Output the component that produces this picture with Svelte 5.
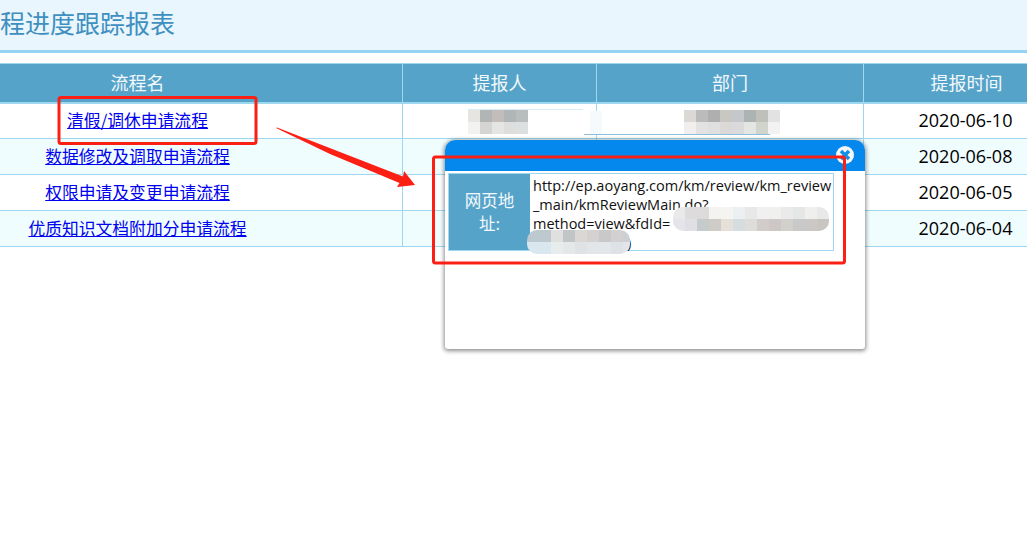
<script>
  const rows = [
    { name: '清假/调休申请流程', date: '2020-06-10' },
    { name: '数据修改及调取申请流程', date: '2020-06-08' },
    { name: '权限申请及变更申请流程', date: '2020-06-05' },
    { name: '优质知识文档附加分申请流程', date: '2020-06-04' }
  ];
  const mosaics = [
    { id: 'm1', cols: 5, cells: ['#e6e5e2','#b2b5b6','#c2bdbb','#b0b5b8','#b9bdbd','#f2f2f1','#d5d5d4','#e5e5e4','#dededd','#dde0e1'] },
    { id: 'm2', cols: 8, cells: ['#dbd9d6','#bcbbbb','#b0afb0','#c8c7c2','#c5c8ca','#adb2b3','#c0c0ba','#e3e2e2','#f0efee','#e3e2e2','#e0dfdf','#dbd8d8','#dadadc','#e4e6e3','#d0d4cb','#f2f2f2'] },
    { id: 'm3', cols: 13, cells: ['#e9e9ea','#dddbdc','#dcdadb','#f4f3f1','#f5f4f2','#edf0f2','#e8e8e8','#f0f0f0','#f0f0ef','#eaeaea','#e5e6e6','#efefee','#e8e8e8','#e4e4ea','#e0e0e4','#c5cacb','#cfccc8','#e6e1d8','#d5dde0','#dfdddc','#d2cccb','#cdc8c7','#d1d0cb','#c9c9c9','#cbc8c6','#c9c6c2'] },
    { id: 'm4', cols: 9, cells: ['#bcc9ce','#bcc9ce','#e0e1df','#c2c5c6','#dad7d5','#d4d2d1','#cac9c9','#d2d0d0','#cccfd3','#dbe7ef','#dbe7ef','#e7ecec','#e4e8e9','#dfe3e6','#e2e6e9','#e4e7ea','#dee2e6','#e2e6ea'] }
  ];
</script>

<div class="page">
  <header class="title-bar"><h1>流程进度跟踪报表</h1></header>

  <table>
    <colgroup>
      <col class="c1" /><col class="c2" /><col class="c3" /><col class="c4" />
    </colgroup>
    <thead>
      <tr><th>流程名</th><th>提报人</th><th>部门</th><th>提报时间</th></tr>
    </thead>
    <tbody>
      {#each rows as row}
        <tr>
          <td><a href="#top">{row.name}</a></td>
          <td></td>
          <td></td>
          <td class="date">{row.date}</td>
        </tr>
      {/each}
    </tbody>
  </table>

  <div class="smudge s-a"></div>
  <div class="smudge s-b"></div>
  <div class="smudge s-c"></div>

  <section class="dialog">
    <div class="dialog-head">
      <svg class="close" viewBox="0 0 18 18" width="18" height="18" aria-hidden="true">
        <circle cx="9" cy="9" r="9" fill="#f4f8fb" />
        <path d="M5 5 L13 13 M13 5 L5 13" stroke="#0f8fe6" stroke-width="3.5" />
      </svg>
    </div>
    <div class="dialog-body">
      <div class="label">网页地址:</div>
      <div class="url">http://ep.aoyang.com/km/review/km_review<br />_main/kmReviewMain.do?<br />method=view&amp;fdId=<br /><span class="tail">)</span></div>
    </div>
  </section>

  {#each mosaics as m}
    <div class="mosaic {m.id}" style="grid-template-columns: repeat({m.cols}, 12px)">
      {#each m.cells as c}
        <i style="background: {c}"></i>
      {/each}
    </div>
  {/each}

  <svg class="notes" width="1027" height="546" viewBox="0 0 1027 546" aria-hidden="true">
    <rect x="59" y="97.5" width="197" height="46" rx="2" fill="none" stroke="#fb1f14" stroke-width="3" />
    <rect x="433.5" y="157" width="411" height="106" rx="2" fill="none" stroke="#fb1f14" stroke-width="3" />
    <polygon points="276,128 277,127.5 403,176.5 404,171 415,185 397,187 399.5,183 330,154" fill="#fb1f14" />
  </svg>
</div>

<style>
  :global(body) {
    margin: 0;
    background: #fff;
  }
  .page {
    position: relative;
    width: 1027px;
    height: 546px;
    overflow: hidden;
    font-family: "Noto Sans CJK SC", "Open Sans", sans-serif;
    font-size: 16.8px;
  }
  .title-bar {
    box-sizing: border-box;
    height: 53px;
    margin-bottom: 10px;
    background: #e9f6fd;
    border-bottom: 3px solid #95d3f3;
  }
  h1 {
    margin: 0 0 0 -25px;
    font-size: 25px;
    font-weight: 400;
    line-height: 44px;
    color: #3f8fc0;
    white-space: nowrap;
  }
  table {
    width: 1197px;
    margin-left: -128px;
    border-collapse: collapse;
    table-layout: fixed;
  }
  .c1 { width: 530px; }
  .c2 { width: 194px; }
  .c3 { width: 267px; }
  .c4 { width: 206px; }
  th {
    box-sizing: border-box;
    height: 39px;
    padding: 0 0 2px;
    background: #56a3c9;
    color: #f2f9fc;
    font-size: 18px;
    font-weight: 400;
    border: 1px solid #9ed8f0;
    border-bottom-width: 2px;
  }
  td {
    box-sizing: border-box;
    height: 36px;
    padding: 0 0 1px;
    text-align: center;
    border: 1px solid #9ed8f0;
  }
  tbody tr:nth-child(even) td {
    background: #f0fdff;
  }
  a {
    color: #0000ee;
  }
  td.date {
    padding: 0 2px 1px 0;
    font-family: "Open Sans", sans-serif;
    font-size: 18px;
    color: #000;
  }
  .smudge {
    position: absolute;
  }
  .s-a {
    left: 590px;
    top: 111px;
    width: 12px;
    height: 24px;
    background: #f5fafd;
  }
  .s-b {
    left: 584px;
    top: 134px;
    width: 186px;
    height: 1px;
    background: #8dbfdc;
  }
  .s-c {
    left: 468px;
    top: 109px;
    width: 115px;
    height: 1px;
    background: #d8eef7;
  }
  .dialog {
    position: absolute;
    left: 445px;
    top: 140px;
    box-sizing: border-box;
    width: 420px;
    height: 209px;
    background: #fff;
    border-radius: 10px 10px 3px 3px;
    box-shadow: 0 1px 4px 1px rgba(0, 0, 0, 0.45);
  }
  .dialog-head {
    display: flex;
    justify-content: flex-end;
    align-items: center;
    box-sizing: border-box;
    height: 31px;
    padding: 0 11px 1px 0;
    background: #0588ee;
    border-radius: 10px 10px 0 0;
  }
  .close {
    display: block;
  }
  .dialog-body {
    display: flex;
    box-sizing: border-box;
    width: 386px;
    height: 78px;
    margin: 2px 0 0 3px;
    border: 1px solid #9ed8f0;
  }
  .label {
    display: flex;
    align-items: center;
    justify-content: center;
    box-sizing: border-box;
    flex: 0 0 81px;
    padding: 0 14px;
    background: #56a3c9;
    color: #f2f9fc;
    font-size: 16.5px;
    line-height: 23px;
    text-align: center;
  }
  .url {
    padding: 2px 0 0 3px;
    font-family: "Open Sans", sans-serif;
    font-size: 14.5px;
    line-height: 19px;
    color: #111;
    white-space: nowrap;
  }
  .tail {
    margin-left: 94px;
  }
  .mosaic {
    position: absolute;
    display: grid;
    grid-auto-rows: 12px;
  }
  .mosaic i {
    display: block;
  }
  .m1 { left: 468px; top: 110px; }
  .m2 { left: 684px; top: 110px; }
  .m3 {
    left: 673px;
    top: 207px;
    border-radius: 10px;
    overflow: hidden;
  }
  .m4 {
    left: 527px;
    top: 230px;
    width: 103px;
    border-radius: 10px;
    overflow: hidden;
  }
  .notes {
    position: absolute;
    left: 0;
    top: 0;
  }
</style>
